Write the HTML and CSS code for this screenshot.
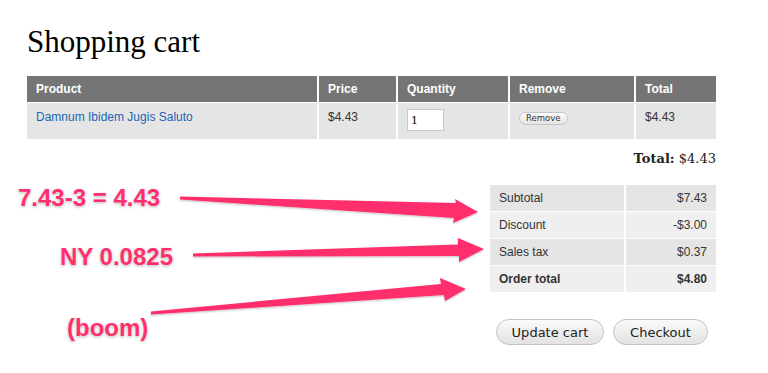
FILE: index.html
```html
<!DOCTYPE html>
<html lang="en">
<head>
  <meta charset="UTF-8" />
  <title>Shopping cart</title>
  <link rel="stylesheet" href="styles.css">
</head>
<body>

<div class="page">
  <h1>Shopping cart</h1>

  <table class="cart">
    <thead>
      <tr>
        <th class="c-product">Product</th>
        <th class="c-price">Price</th>
        <th class="c-qty">Quantity</th>
        <th class="c-remove">Remove</th>
        <th class="c-total">Total</th>
      </tr>
    </thead>
    <tbody>
      <tr>
        <td><a href="#">Damnum Ibidem Jugis Saluto</a></td>
        <td>$4.43</td>
        <td><input type="text" class="qty" value="1"></td>
        <td><button class="remove">Remove</button></td>
        <td>$4.43</td>
      </tr>
    </tbody>
  </table>

  <p class="cart-total"><strong>Total:</strong> $4.43</p>

  <div class="summary-wrap">
    <table class="summary">
      <tr class="odd"><td>Subtotal</td><td class="amt">$7.43</td></tr>
      <tr class="even"><td>Discount</td><td class="amt">-$3.00</td></tr>
      <tr class="odd"><td>Sales tax</td><td class="amt">$0.37</td></tr>
      <tr class="even grand"><td>Order total</td><td class="amt">$4.80</td></tr>
    </table>
  </div>

  <div class="actions">
    <button class="btn btn-update">Update cart</button>
    <button class="btn btn-checkout">Checkout</button>
  </div>
</div>

<!-- annotations drawn over the page -->
<div class="note note-1">7.43-3 = 4.43</div>
<div class="note note-2">NY 0.0825</div>
<div class="note note-3">(boom)</div>

<svg class="arrows" width="768" height="373" viewBox="0 0 768 373">
  <defs>
    <filter id="glow" x="-10%" y="-50%" width="120%" height="200%">
      <feDropShadow dx="0" dy="1" stdDeviation="1" flood-color="#000" flood-opacity="0.25"/>
    </filter>
  </defs>
  <g fill="#ff2e6c" filter="url(#glow)">
    <!-- arrow 1 -->
    <polygon points="180,196.5 456,203 455,199 478,212 453,223 454,218 180,199.5"/>
    <!-- arrow 2 -->
    <polygon points="193,253.5 458,244.5 458,238 484,249 459,262 459,256 193,256.5"/>
    <!-- arrow 3 -->
    <polygon points="151,311.5 441,284 440,278 466,289 445,301 444,295 151,314.5"/>
  </g>
</svg>

</body>
</html>
```

FILE: styles.css
```css
body {
  margin: 0;
  font-family: "Liberation Sans", Arial, sans-serif;
  font-size: 12px;
  color: #333;
  background: #fff;
}
.page {
  width: 689px;
  margin-left: 27px;
  padding-top: 24px;
}
h1 {
  font-family: "Liberation Serif", Georgia, serif;
  font-weight: normal;
  font-size: 31px;
  line-height: 36px;
  color: #000;
  margin: 0 0 16px;
}
table {
  border-collapse: collapse;
}
.cart {
  width: 689px;
}
.cart th {
  background: #757575;
  color: #fff;
  font-weight: bold;
  text-align: left;
  height: 26px;
  padding: 0 9px;
  border-left: 2px solid #fff;
  border-bottom: 1px solid #fff;
}
.cart th:first-child, .cart td:first-child {
  border-left: 0;
}
.cart td {
  background: #e5e5e5;
  vertical-align: top;
  padding: 7px 9px 0;
  height: 29px;
  border-left: 2px solid #fff;
}
.c-product { width: 272px; }
.c-price { width: 59px; }
.c-qty { width: 92px; }
.c-remove { width: 106px; }
.cart a {
  color: #2166b3;
  text-decoration: none;
}
.qty {
  width: 29px;
  height: 16px;
  margin: -1px 0 0 0;
  padding: 2px 3px;
  border: 1px solid #c8c8c8;
  background: #fff;
  font-family: "DejaVu Serif", Georgia, serif;
  font-size: 11px;
  color: #000;
}
.remove {
  font-family: "DejaVu Sans", sans-serif;
  font-size: 8.5px;
  color: #333;
  padding: 0 6px;
  height: 13px;
  line-height: 11px;
  border: 1px solid #c4c4c4;
  border-radius: 7px;
  background: linear-gradient(#fdfdfd, #e3e3e3);
  margin-top: 1px;
}
.cart-total {
  text-align: right;
  font-family: "DejaVu Serif", Georgia, serif;
  font-size: 13px;
  color: #222;
  margin: 12px 0 19px;
}
.summary-wrap {
  display: flex;
  justify-content: flex-end;
}
.summary {
  width: 226px;
}
.summary td {
  height: 26px;
  padding: 0 9px;
  border-top: 1px solid #fff;
}
.summary tr:first-child td {
  border-top: 0;
}
.summary td + td {
  border-left: 2px solid #fff;
}
.summary .odd td { background: #e5e5e5; }
.summary .even td { background: #efefef; }
.summary .amt {
  text-align: right;
  width: 72px;
}
.summary .grand td {
  font-weight: bold;
}
.actions {
  display: flex;
  justify-content: flex-end;
  gap: 9px;
  margin-top: 27px;
  padding-right: 8px;
}
.btn {
  box-sizing: border-box;
  font-family: "DejaVu Sans", sans-serif;
  font-size: 13px;
  color: #222;
  height: 26px;
  padding: 0;
  white-space: nowrap;
  border: 1px solid #c2c2c2;
  border-radius: 13px;
  background: linear-gradient(#fafafa, #e2e2e2);
}
.btn-update { width: 108px; }
.btn-checkout { width: 95px; }

.note {
  position: absolute;
  font-family: "Liberation Sans", Arial, sans-serif;
  font-weight: bold;
  font-size: 24px;
  color: #ff2e6c;
  text-shadow: 0 0 2px #fff, 0 1px 3px rgba(0, 0, 0, 0.35);
  white-space: nowrap;
}
.note-1 { left: 18px; top: 184px; }
.note-2 { left: 60px; top: 243px; }
.note-3 { left: 67px; top: 314px; }
.arrows {
  position: absolute;
  left: 0;
  top: 0;
  pointer-events: none;
}
```
